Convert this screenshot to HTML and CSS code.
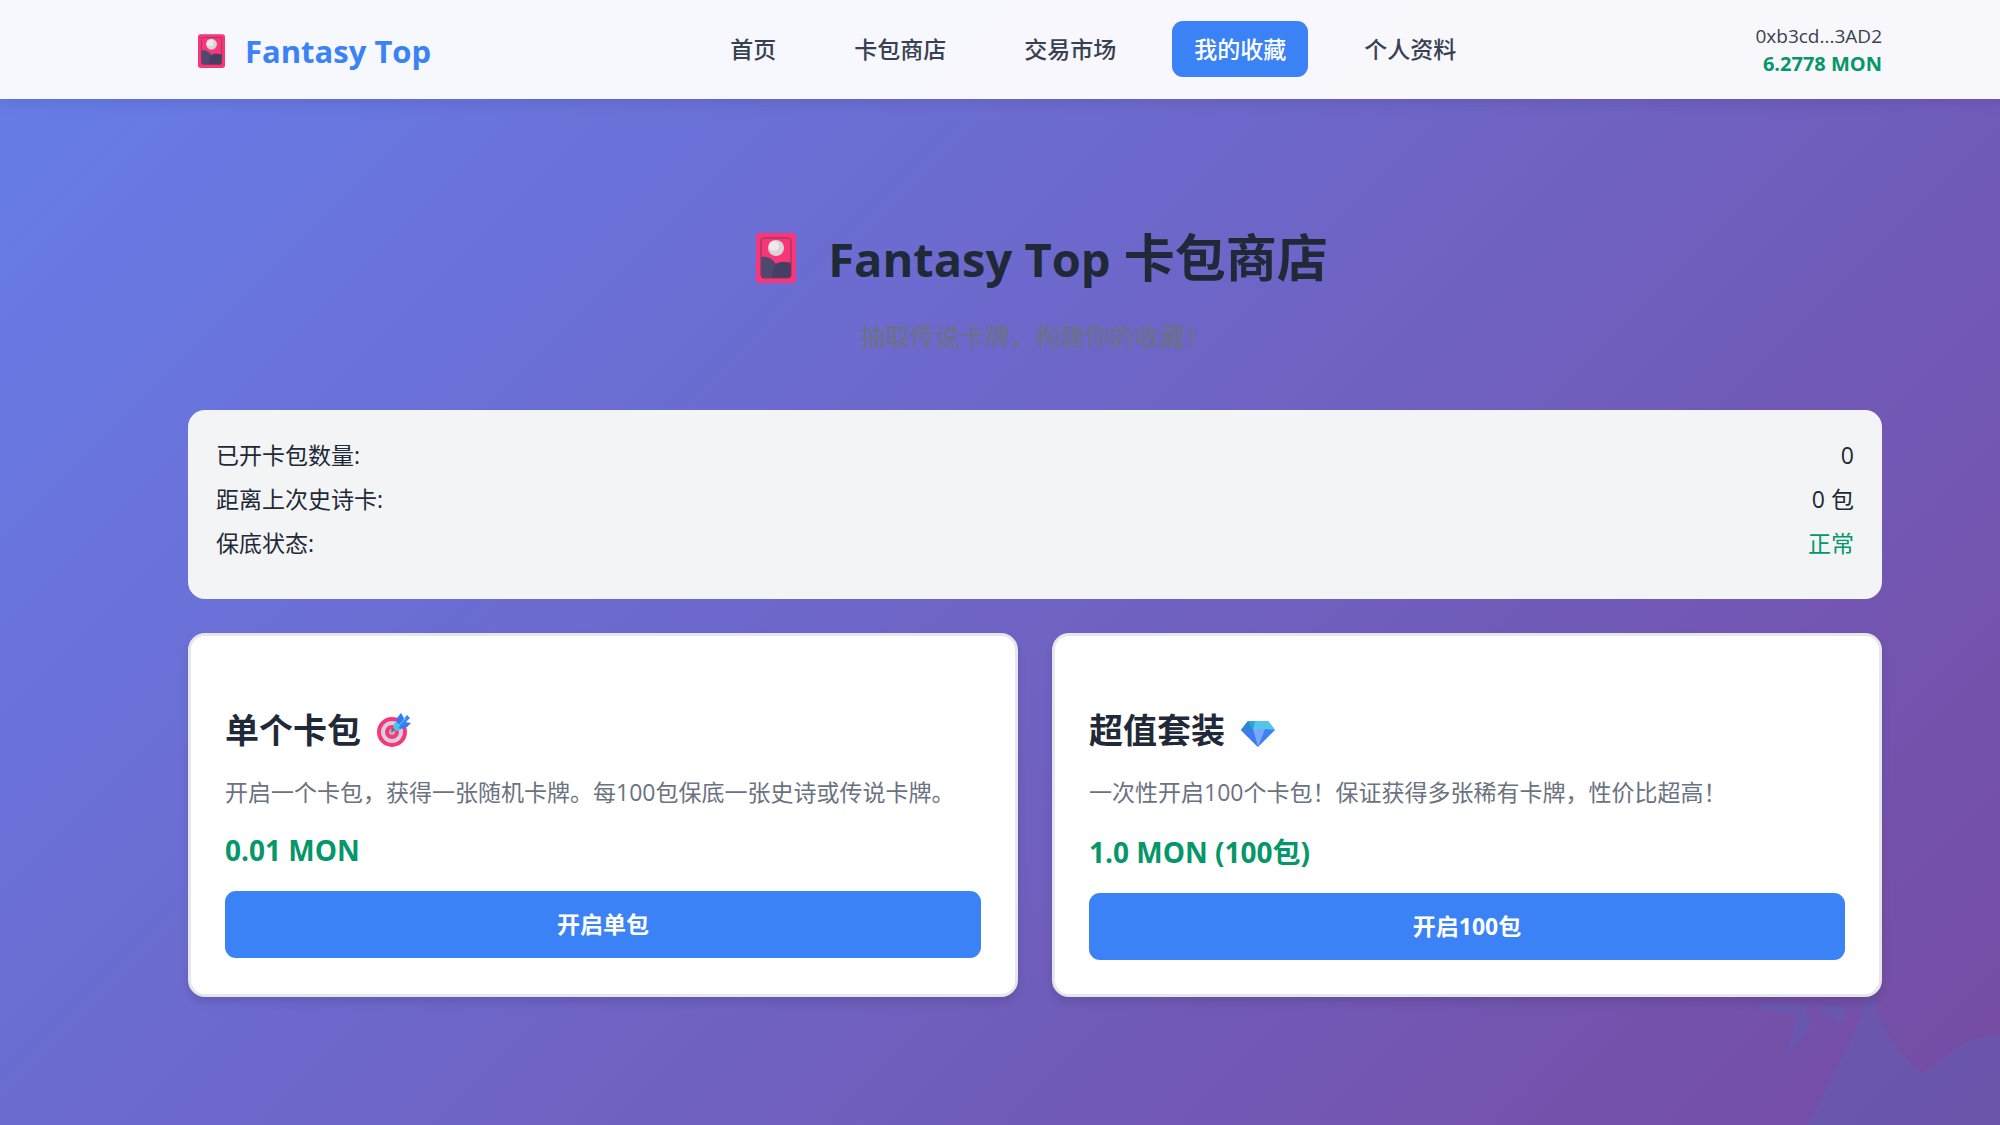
FILE: index.html
```html
<!DOCTYPE html>
<html lang="zh-CN">
<head>
<meta charset="UTF-8" />
<meta name="viewport" content="width=device-width, initial-scale=1" />
<title>Fantasy Top 卡包商店</title>
<link rel="stylesheet" href="styles.css">
</head>
<body>
  <!-- Shared card icon -->
  <svg class="icon-defs" aria-hidden="true">
    <symbol id="icon-card" viewBox="0 0 40 50">
      <rect width="40" height="50" rx="4" fill="#f8367a"/>
      <rect x="5" y="5" width="30" height="40" rx="3" fill="#f8367a"/>
      <path d="M5 24c6-1 11 1 15 7 5-3 10-2 15-1v12q0 3-3 3H8q-3 0-3-3z" fill="#50496f"/>
      <path d="M20 31c5-3 10-2 15-1v12q0 3-3 3H16c0-6 1-10 4-14z" fill="#463f63"/>
      <rect x="5" y="5" width="30" height="40" rx="3" fill="none" stroke="#7a3b56"/>
      <circle cx="20" cy="15" r="8" fill="#d8d5da"/>
      <circle cx="18" cy="13" r="5" fill="#eceaed"/>
    </symbol>
  </svg>

  <header class="navbar">
    <div class="navbar-inner">
      <a class="logo" href="#">
        <svg class="logo-icon" aria-hidden="true"><use href="#icon-card"/></svg>
        <span>Fantasy Top</span>
      </a>
      <nav class="nav-links">
        <a href="#">首页</a>
        <a href="#">卡包商店</a>
        <a href="#">交易市场</a>
        <a href="#" class="active">我的收藏</a>
        <a href="#">个人资料</a>
      </nav>
      <div class="wallet">
        <div class="wallet-address">0xb3cd...3AD2</div>
        <div class="wallet-balance">6.2778 MON</div>
      </div>
    </div>
  </header>

  <main class="container">
    <div class="shop-header">
      <h1>
        <svg class="title-icon" aria-hidden="true"><use href="#icon-card"/></svg>
        <span><span class="brand">Fantasy Top</span> 卡包商店</span>
      </h1>
      <p>抽取传说卡牌，构建你的收藏！</p>
    </div>

    <section class="stats">
      <div class="stat-row"><span>已开卡包数量:</span><span>0</span></div>
      <div class="stat-row"><span>距离上次史诗卡:</span><span>0 包</span></div>
      <div class="stat-row"><span>保底状态:</span><span class="ok">正常</span></div>
    </section>

    <section class="packs">
      <article class="pack">
        <h3>
          <span>单个卡包</span>
          <svg class="pack-icon" viewBox="0 0 34 34" aria-hidden="true">
            <circle cx="15" cy="19" r="15" fill="#f8367a"/>
            <circle cx="15" cy="19" r="11" fill="#d3d0e0"/>
            <circle cx="15" cy="19" r="7" fill="#f8367a"/>
            <circle cx="15" cy="19" r="3" fill="#b9b4bd"/>
            <path d="M15 18l3-3" stroke="#636363" stroke-width="2" stroke-linecap="round"/>
            <path d="M17 11l6-5 6 6-6 5q-3 2-5 0-3-3-1-6z" fill="#4cc3ea"/>
            <path d="M20 10V5l4-5 3 5-3 7z" fill="#2f7df6"/>
            <path d="M22 14l6-5 6 1-4 4-7 2z" fill="#2f7df6"/>
            <path d="M22 12l8-10 3 3-9 9z" fill="#3b86f8"/>
            <path d="M21 13l8-8" stroke="#5bc9ef" stroke-width="1"/>
          </svg>
        </h3>
        <p class="pack-desc">开启一个卡包，获得一张随机卡牌。每100包保底一张史诗或传说卡牌。</p>
        <p class="pack-price">0.01 MON</p>
        <button type="button" class="btn">开启单包</button>
      </article>

      <article class="pack">
        <h3>
          <span>超值套装</span>
          <svg class="pack-icon" viewBox="0 0 34 34" aria-hidden="true">
            <path d="M7 8h20l7 9-17 17L0 17z" fill="#3b82f0"/>
            <path d="M7 8l5 9H0z" fill="#2f86d2"/>
            <path d="M7 8h9l-4 9z" fill="#2fa5cf"/>
            <path d="M14 8h13l7 9-10-1-12 1z" fill="#4fc6ea"/>
            <path d="M12 17q6-2 12-1l-7 18z" fill="#78a7fb"/>
            <path d="M0 17h12l5 17z" fill="#3d7bf0"/>
          </svg>
        </h3>
        <p class="pack-desc">一次性开启100个卡包！保证获得多张稀有卡牌，性价比超高！</p>
        <p class="pack-price">1.0 MON (100包)</p>
        <button type="button" class="btn">开启100包</button>
      </article>
    </section>
  </main>

  <!-- Corner decoration behind the content -->
  <svg class="corner-shape" viewBox="0 0 240 126" aria-hidden="true">
    <path d="M48 126L103 15V0h11l3 12q19 42 44 62 8-3 20-13 26-23 49-24h10v89z"/>
    <path d="M0 5h46l4 26-22 22 8-37-36-6zM58 6h28v14l-8 5-3-7-17-6z"/>
  </svg>
</body>
</html>
```

FILE: styles.css
```css
* {
  box-sizing: border-box;
  margin: 0;
  padding: 0;
}

body {
  position: relative;
  min-height: 100vh;
  font-family: 'Segoe UI', 'Open Sans', 'Noto Sans CJK SC', sans-serif;
  font-size: 23px;
  color: #1f2937;
  background: linear-gradient(135deg, #667eea 0%, #764ba2 100%);
}

.icon-defs {
  position: absolute;
  width: 0;
  height: 0;
}

/* Navbar */
.navbar {
  position: relative;
  z-index: 1;
  background: rgba(255, 255, 255, 0.95);
  box-shadow: 0 3px 14px rgba(0, 0, 0, 0.1);
}

.navbar-inner {
  display: flex;
  justify-content: space-between;
  align-items: center;
  min-height: 99px;
  padding: 0 118px 0 188px;
}

.logo {
  display: flex;
  align-items: center;
  gap: 20px;
  padding: 3px 0 0 10px;
  font-size: 31px;
  font-weight: 700;
  color: #3b82f6;
  text-decoration: none;
}

.logo-icon {
  width: 27px;
  height: 34px;
}

.nav-links {
  display: flex;
  gap: 34px;
  margin-bottom: 2px;
}

.nav-links a {
  padding: 11px 22px;
  border-radius: 11px;
  font-weight: 500;
  line-height: 34px;
  color: #374151;
  text-decoration: none;
}

.nav-links a.active {
  background: #3b82f6;
  color: #fff;
}

.wallet {
  font-size: 20px;
  line-height: 27px;
  text-align: right;
}

.wallet-address {
  font-size: 19px;
  font-weight: 500;
  color: #374151;
}

.wallet-balance {
  font-weight: 700;
  color: #059669;
}

/* Shop */
.container {
  position: relative;
  z-index: 1;
  padding: 120px 118px 113px 188px;
}

.shop-header {
  margin-bottom: 56px;
  text-align: center;
}

h1 {
  display: flex;
  justify-content: center;
  align-items: center;
  gap: 32px;
  margin-bottom: 21px;
  padding-left: 14px;
  font-size: 51px;
  line-height: 76px;
}

h1 .brand {
  font-size: 47px;
}

.title-icon {
  width: 40px;
  height: 50px;
}

.shop-header p {
  font-size: 25px;
  line-height: 36px;
  color: #6b7280;
}

.stats {
  margin-bottom: 34px;
  padding: 29px 28px 28px;
  border-radius: 17px;
  background: #f3f4f6;
}

.stat-row {
  display: flex;
  justify-content: space-between;
  margin-bottom: 11px;
  line-height: 33px;
}

.stat-row .ok {
  color: #059669;
}

.packs {
  display: grid;
  grid-template-columns: 1fr 1fr;
  gap: 34px;
}

.pack {
  padding: 34px;
  border: 3px solid #e5e7eb;
  border-radius: 17px;
  background: #fff;
  box-shadow: 0 6px 9px rgba(0, 0, 0, 0.1);
}

h3 {
  display: flex;
  align-items: center;
  gap: 16px;
  margin: 35px 0 20px;
  font-size: 34px;
  line-height: 50px;
}

.pack-icon {
  width: 34px;
  height: 34px;
}

.pack-desc {
  margin-bottom: 22px;
  line-height: 34px;
  color: #6b7280;
}

.pack-price {
  margin-bottom: 22px;
  font-size: 28px;
  font-weight: 700;
  color: #059669;
}

.btn {
  width: 100%;
  padding: 17px 34px;
  border: none;
  border-radius: 11px;
  background: #3b82f6;
  color: #fff;
  font-family: inherit;
  font-size: 23px;
  font-weight: 700;
  line-height: 33px;
  cursor: pointer;
}

.btn:hover {
  background: #2563eb;
}

.corner-shape {
  position: absolute;
  right: 0;
  bottom: 0;
  width: 240px;
  height: 126px;
  fill: #5b63b8;
  opacity: 0.4;
}
```
